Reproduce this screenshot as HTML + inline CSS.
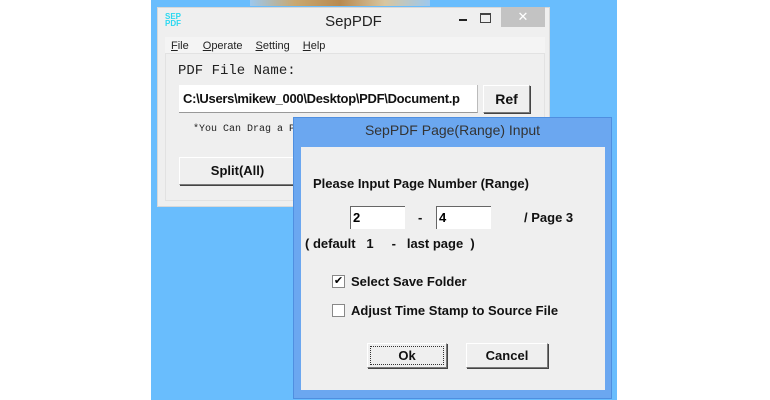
<!DOCTYPE html>
<html><head><style>
body{margin:0;width:770px;height:400px;background:#fff;position:relative;overflow:hidden;font-family:"Liberation Sans",Arial,sans-serif}
.a{position:absolute}
.btn{position:absolute;background:#efefef;border:1px solid #fff;border-right-color:#7a7a7a;border-bottom-color:#7a7a7a;box-shadow:1px 1px 0 #444;font-weight:bold;font-size:13px;text-align:center;color:#111}
.b{font-weight:bold;font-size:13px;color:#111;position:absolute;white-space:nowrap}
.cb{position:absolute;width:11px;height:11px;background:#fff;border:1px solid #888;font-size:11px;line-height:11px;text-align:center}
</style></head><body>
<div class="a" style="left:151px;top:0;width:466px;height:400px;background:#69bdfd"></div>
<div class="a" style="left:250px;top:0;width:180px;height:6px;background:linear-gradient(90deg,#9cc8ee,#c9a870,#b88a50,#d8c6a0,#9cc8ee)"></div>
<div class="a" style="left:157px;top:7px;width:393px;height:200px;background:#efefef;border:1px solid #d8d8d8;box-sizing:border-box"></div>
<div class="a" style="left:165px;top:13px;font-size:8px;line-height:7px;color:#2cd8f0;font-weight:bold">SEP<br>PDF</div>
<div class="a" style="left:157px;top:13px;width:393px;text-align:center;font-size:15px;color:#222">SepPDF</div>
<div class="a" style="left:459px;top:19px;width:8px;height:2px;background:#222"></div>
<div class="a" style="left:480px;top:13px;width:9px;height:7px;border:1px solid #444;border-top-width:2px"></div>
<div class="a" style="left:501px;top:7px;width:44px;height:20px;background:#c3c3c3;color:#fff;text-align:center;font-size:13px;line-height:20px">✕</div>
<div class="a" style="left:165px;top:37px;width:380px;height:16px;background:#f4f4f4;font-size:11px;color:#222;line-height:18px">
<span style="margin-left:6px"><u>F</u>ile</span><span style="margin-left:14px"><u>O</u>perate</span><span style="margin-left:13px"><u>S</u>etting</span><span style="margin-left:13px"><u>H</u>elp</span></div>
<div class="a" style="left:165px;top:53px;width:380px;height:148px;border:1px solid #e2e2e2;box-sizing:border-box"></div>
<div class="a" style="left:178px;top:63px;font-family:'Liberation Mono',monospace;font-size:14px;color:#222">PDF File Name:</div>
<div class="a" style="left:179px;top:85px;width:298px;height:27px;background:#fff;border-bottom:1px solid #999;border-right:1px solid #bbb;font-weight:bold;font-size:13px;letter-spacing:-0.3px;line-height:27px;color:#111;text-indent:4px;overflow:hidden;white-space:nowrap">C:\Users\mikew_000\Desktop\PDF\Document.p</div>
<div class="btn" style="left:483px;top:85px;width:45px;height:26px;line-height:26px;font-size:14px">Ref</div>
<div class="a" style="left:193px;top:124px;font-family:'Liberation Mono',monospace;font-size:10px;color:#222">*You Can Drag a PDF</div>
<div class="btn" style="left:179px;top:157px;width:115px;height:26px;line-height:26px">Split(All)</div>
<div class="a" style="left:293px;top:117px;width:319px;height:282px;background:#6ba7f0;border:1px solid #4f8fe0;box-sizing:border-box"></div>
<div class="a" style="left:293px;top:122px;width:319px;text-align:center;font-size:14px;color:#333">SepPDF Page(Range) Input</div>
<div class="a" style="left:301px;top:147px;width:304px;height:243px;background:#efefef"></div>
<div class="b" style="left:313px;top:176px">Please Input Page Number (Range)</div>
<div class="a" style="left:350px;top:206px;width:54px;height:22px;background:#fff;border-top:1px solid #666;border-left:1px solid #666;font-weight:bold;font-size:13px;line-height:22px;text-indent:2px">2</div>
<div class="b" style="left:418px;top:210px">-</div>
<div class="a" style="left:436px;top:206px;width:54px;height:22px;background:#fff;border-top:1px solid #666;border-left:1px solid #666;font-weight:bold;font-size:13px;line-height:22px;text-indent:2px">4</div>
<div class="b" style="left:524px;top:210px">/ Page 3</div>
<div class="b" style="left:305px;top:236px;white-space:pre">( default   1     -   last page  )</div>
<div class="cb" style="left:332px;top:275px">✔</div>
<div class="b" style="left:351px;top:274px">Select Save Folder</div>
<div class="cb" style="left:332px;top:304px"></div>
<div class="b" style="left:351px;top:303px">Adjust Time Stamp to Source File</div>
<div class="btn" style="left:367px;top:343px;width:78px;height:23px;line-height:23px;outline:1px dotted #333;outline-offset:-4px">Ok</div>
<div class="btn" style="left:466px;top:343px;width:80px;height:23px;line-height:23px">Cancel</div>
</body></html>
